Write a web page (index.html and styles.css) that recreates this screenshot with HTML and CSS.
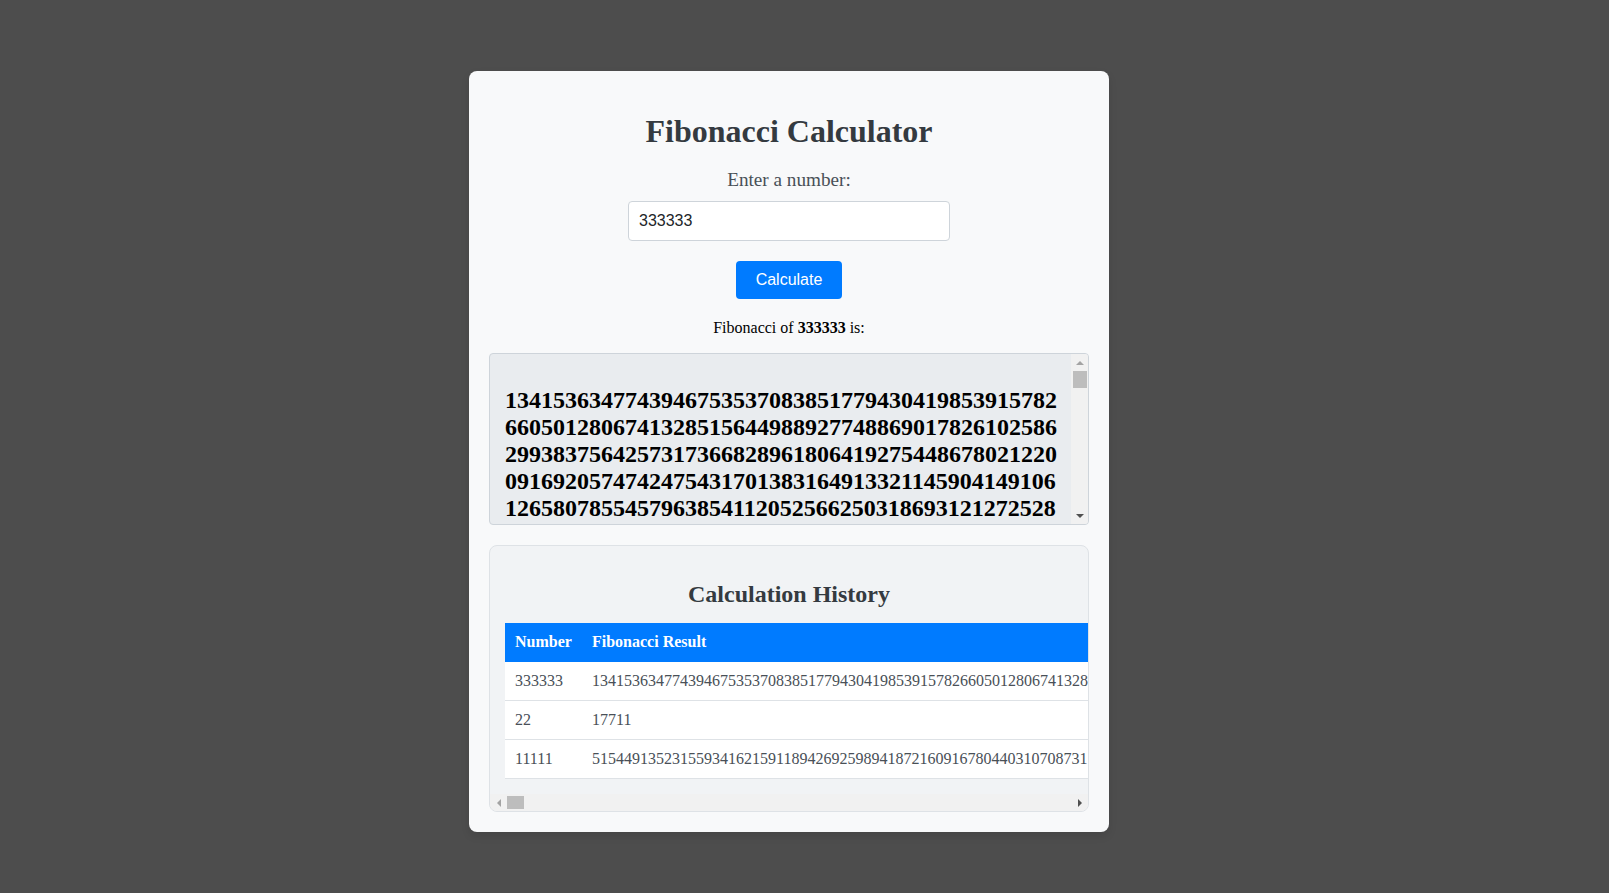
FILE: index.html
```html
<!DOCTYPE html>
<html lang="en">
<head>
  <meta charset="UTF-8">
  <title>Fibonacci Calculator</title>
  <link rel="stylesheet" href="styles.css">
</head>
<body>

<div class="container">
  <h1>Fibonacci Calculator</h1>
  <form id="fibForm">
    <label for="number" class="number-label">Enter a number:</label>
    <input type="number" id="number" class="number-input" value="333333">
    <button type="submit" class="calc-btn">Calculate</button>
  </form>

  <p class="result-label">Fibonacci of <strong id="resultNumber"></strong> is:</p>
  <div class="result-box">
    <div class="result-content">
      <h2 id="resultValue"></h2>
    </div>
    <div class="scrollbar-v">
      <div class="scroll-btn">
        <svg width="8" height="4" viewBox="0 0 8 4"><path d="M4 0 L8 4 H0 Z" fill="#a3a3a3"/></svg>
      </div>
      <div class="scroll-thumb"></div>
      <div class="scroll-space"></div>
      <div class="scroll-btn">
        <svg width="8" height="4" viewBox="0 0 8 4"><path d="M0 0 H8 L4 4 Z" fill="#505050"/></svg>
      </div>
    </div>
  </div>

  <div class="history-box">
    <div class="history-content">
      <h2>Calculation History</h2>
      <table class="history-table">
        <thead>
          <tr>
            <th class="number-col">Number</th>
            <th>Fibonacci Result</th>
          </tr>
        </thead>
        <tbody id="historyRows"></tbody>
      </table>
    </div>
    <div class="scrollbar-h">
      <div class="scroll-btn">
        <svg width="4" height="8" viewBox="0 0 4 8"><path d="M4 0 V8 L0 4 Z" fill="#a3a3a3"/></svg>
      </div>
      <div class="scroll-thumb"></div>
      <div class="scroll-space"></div>
      <div class="scroll-btn">
        <svg width="4" height="8" viewBox="0 0 4 8"><path d="M0 0 L4 4 L0 8 Z" fill="#505050"/></svg>
      </div>
    </div>
  </div>
</div>

<script src="app.js"></script>
</body>
</html>
```
FILE: styles.css
```css
* { box-sizing: border-box; }
body {
  margin: 0;
  height: 100vh;
  padding: 71px 31px 0 0;
  display: flex;
  justify-content: center;
  align-items: flex-start;
  font-family: "Liberation Serif", "Times New Roman", serif;
  background-color: #4d4d4d;
  overflow: hidden;
}
.container {
  width: 640px;
  padding: 20px;
  background-color: #f8f9fa;
  border-radius: 8px;
  box-shadow: 0 4px 8px rgba(0, 0, 0, 0.1);
  text-align: center;
}
h1 {
  margin: 22px 0 19px;
  font-size: 32px;
  color: #343a40;
}
.number-label {
  display: block;
  margin-bottom: 10px;
  font-size: 19.2px;
  color: #495057;
}
.number-input {
  display: block;
  width: 322px;
  margin: 0 auto 20px;
  padding: 10px;
  border: 1px solid #ced4da;
  border-radius: 4px;
  font-family: "Liberation Sans", Arial, sans-serif;
  font-size: 16px;
  color: #212529;
  background-color: #fff;
  appearance: textfield;
}
.calc-btn {
  padding: 10px 20px;
  border: none;
  border-radius: 4px;
  font-family: "Liberation Sans", Arial, sans-serif;
  font-size: 16px;
  color: #fff;
  background-color: #007bff;
  cursor: pointer;
}
.calc-btn:hover {
  background-color: #0069d9;
}
.result-label {
  margin: 20px 0 16px;
  font-size: 16px;
  color: #000;
}
.result-box {
  display: flex;
  height: 172px;
  border: 1px solid #ced4da;
  border-radius: 4px;
  background-color: #e9ecef;
  text-align: left;
  overflow: hidden;
}
.result-content {
  flex: 1;
  min-width: 0;
  padding: 15px 14px 0 15px;
  overflow: hidden;
}
.result-content h2 {
  margin: 18px 0 0;
  font-size: 24px;
  color: #000;
  word-break: break-all;
}
.history-box {
  margin-top: 20px;
  border: 1px solid #dee2e6;
  border-radius: 8px;
  background-color: #f1f3f5;
  overflow: hidden;
}
.history-content {
  padding: 15px 0;
}
.history-content h2 {
  margin: 20px 0 15px;
  font-size: 24px;
  color: #343a40;
}
.history-table {
  width: 583px;
  margin-left: 15px;
  border-collapse: collapse;
  table-layout: fixed;
  background-color: #fff;
  font-size: 16px;
  text-align: left;
  white-space: nowrap;
}
.number-col {
  width: 77px;
}
.history-table th {
  padding: 10px 10px 11px;
  color: #fff;
  background-color: #007bff;
}
.history-table td {
  padding: 10px 0 10px 10px;
  border-bottom: 1px solid #dee2e6;
  color: #495057;
  overflow: hidden;
}

/* scrollbars drawn by hand, same look on every machine */
.scrollbar-v,
.scrollbar-h {
  display: flex;
  flex-shrink: 0;
  background-color: #f1f1f1;
}
.scrollbar-v {
  flex-direction: column;
  width: 17px;
}
.scrollbar-h {
  height: 17px;
}
.scroll-btn {
  flex: 0 0 17px;
  display: flex;
  align-items: center;
  justify-content: center;
}
.scroll-space {
  flex: 1;
}
.scroll-thumb {
  flex: 0 0 17px;
  background-color: #bdbdbd;
}
.scrollbar-v .scroll-thumb {
  margin: 0 1px 0 2px;
}
.scrollbar-h .scroll-thumb {
  margin: 2px 0;
}
```
FILE: app.js
```js
// boxes clip anyway, no need to put 70k digits in the page
const RESULT_DIGITS = 230;
const HISTORY_DIGITS = 62;

// fast doubling, plain loop would take too long for big numbers
function fib(n) {
  if (n === 0n) return [0n, 1n];
  const [a, b] = fib(n / 2n);
  const c = a * (2n * b - a);
  const d = a * a + b * b;
  return n % 2n === 0n ? [c, d] : [d, c + d];
}

const history = [];

function calculate(value) {
  const result = fib(BigInt(value))[0].toString();
  document.getElementById('resultNumber').textContent = value;
  document.getElementById('resultValue').textContent = result.slice(0, RESULT_DIGITS);
  history.unshift([value, result]);
  renderHistory();
}

function renderHistory() {
  const rows = document.getElementById('historyRows');
  rows.innerHTML = '';
  history.forEach(([number, result]) => {
    const row = document.createElement('tr');
    const numberCell = document.createElement('td');
    const resultCell = document.createElement('td');
    numberCell.textContent = number;
    resultCell.textContent = result.slice(0, HISTORY_DIGITS);
    row.append(numberCell, resultCell);
    rows.appendChild(row);
  });
}

document.getElementById('fibForm').addEventListener('submit', function(event) {
  event.preventDefault();
  calculate(document.getElementById('number').value);
});

['11111', '22', '333333'].forEach(calculate);
```
